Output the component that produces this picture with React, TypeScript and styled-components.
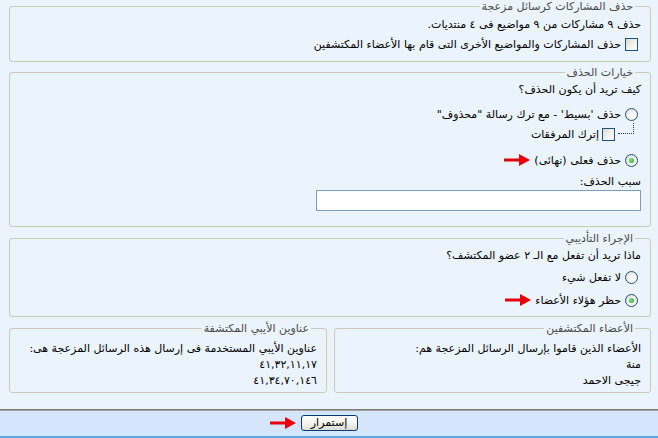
import React from "react";
import styled, { createGlobalStyle } from "styled-components";

const Global = createGlobalStyle`
  html, body { margin: 0; padding: 0; background: #ebf3fd; }
  body { font-family: "DejaVu Sans", sans-serif; font-size: 11px; color: #000; }
`;

const Page = styled.div`
  height: 438px;
  display: flex;
  flex-direction: column;
  box-sizing: border-box;
  overflow: hidden;
`;

const Content = styled.div`
  display: flex;
  flex-direction: column;
  gap: 4px;
  padding: 0 7px 0 9px;
`;

const Box = styled.fieldset<{ $bottom?: number; $gap?: number }>`
  margin: ${(p) => p.$gap ?? 0}px 0 0 0;
  border: 1px solid #cacbb7;
  border-radius: 3px;
  padding: 0 9px ${(p) => p.$bottom ?? 6}px 9px;
  min-width: 0;
  display: flex;
  flex-direction: column;
`;

const Legend = styled.legend`
  padding: 0 2px;
  margin-right: 6px;
  font-size: 11px;
  line-height: 13px;
  height: 13px;
  color: #4a4a4a;
`;

const Line = styled.div<{ $h?: number; $mt?: number }>`
  line-height: ${(p) => p.$h ?? 16}px;
  height: ${(p) => p.$h ?? 16}px;
  margin-top: ${(p) => p.$mt ?? 0}px;
  white-space: nowrap;
`;

const OptRow = styled.label<{ $mt?: number }>`
  display: flex;
  align-items: center;
  gap: 4px;
  height: 18px;
  margin-top: ${(p) => p.$mt ?? 0}px;
  white-space: nowrap;
`;

const Radio = styled.span<{ $on?: boolean }>`
  width: 11px;
  height: 11px;
  margin-right: 3px;
  border-radius: 50%;
  border: 1px solid #1c5180;
  background: radial-gradient(circle at 65% 65%, #ffffff 0%, #f3f3ef 45%, #d6d6cc 100%);
  display: inline-flex;
  align-items: center;
  justify-content: center;
  flex: none;
  &::after {
    content: "";
    display: ${(p) => (p.$on ? "block" : "none")};
    width: 5px;
    height: 5px;
    border-radius: 50%;
    background: radial-gradient(circle at 40% 40%, #7de27d, #21a121);
  }
`;

const Check = styled.span<{ $mr?: number }>`
  width: 11px;
  height: 11px;
  margin-right: ${(p) => p.$mr ?? 3}px;
  border: 1px solid #1c5180;
  background: linear-gradient(135deg, #dcdcd4 0%, #f4f4f0 60%, #ffffff 100%);
  flex: none;
`;

const SubOption = styled.div`
  display: flex;
  align-items: flex-end;
  height: 18px;
  margin-right: 7px;
`;

const Connector = styled.span`
  width: 15px;
  height: 10px;
  border-right: 1px dotted #333;
  border-bottom: 1px dotted #333;
  margin-bottom: 7px;
  flex: none;
`;

const SubLabel = styled.label`
  display: flex;
  align-items: center;
  gap: 3px;
  height: 14px;
  white-space: nowrap;
  margin-right: 1px;
`;

const TextInput = styled.input`
  width: 325px;
  height: 21px;
  box-sizing: border-box;
  border: 1px solid #7f9db9;
  background: #fff;
  margin: 0;
  padding: 1px 3px;
  font-family: "DejaVu Sans", sans-serif;
  font-size: 11px;
`;

const Row = styled.div`
  display: grid;
  grid-template-columns: 317px 318px;
  justify-content: space-between;
  margin-top: 1px;
`;

const Bar = styled.div`
  margin-top: auto;
  height: 29px;
  box-sizing: border-box;
  border-top: 1px solid #7d7d76;
  box-shadow: inset 0 1px 0 #a3a39d;
  border-bottom: 2px solid #5aa5e1;
  background: #d5e5fb;
  display: flex;
  justify-content: center;
  padding-top: 5px;
`;

const BtnWrap = styled.div`
  position: relative;
  height: 16px;
`;

const Button = styled.button`
  width: 57px;
  height: 16px;
  box-sizing: border-box;
  border: 1px solid #003c74;
  border-radius: 3px;
  background: linear-gradient(#ffffff 0%, #f4f4f0 50%, #dcdcd4 100%);
  font-family: "DejaVu Sans", sans-serif;
  font-size: 11px;
  line-height: 12px;
  padding: 0;
  color: #000;
  margin: 0;
`;

const ArrowSpot = styled.span`
  position: absolute;
  top: 2px;
  left: -31px;
  display: flex;
`;

const Arrow = () => (
  <svg width="26" height="12" viewBox="0 0 26 12" style={{ flex: "none" }}>
    <rect x="0" y="4.5" width="17" height="3" fill="#e8000b" />
    <polygon points="15,0 26,6 15,12" fill="#e8000b" />
  </svg>
);

export default function App() {
  return (
    <Page dir="rtl">
      <Global />
      <Content>
        <Box $bottom={8}>
          <Legend>حذف المشاركات كرسائل مزعجة</Legend>
          <Line $h={17} $mt={3}>حذف ٩ مشاركات من ٩ مواضيع فى ٤ منتديات.</Line>
          <OptRow $mt={2}>
            <Check />
            <span>حذف المشاركات والمواضيع الأخرى التى قام بها الأعضاء المكتشفين</span>
          </OptRow>
        </Box>

        <Box $bottom={15}>
          <Legend>خيارات الحذف</Legend>
          <Line $h={16} $mt={3}>كيف تريد أن يكون الحذف؟</Line>
          <OptRow $mt={7}>
            <Radio />
            <span>حذف 'بسيط' - مع ترك رسالة "محذوف"</span>
          </OptRow>
          <SubOption>
            <Connector />
            <SubLabel>
              <Check $mr={2} />
              <span>إترك المرفقات</span>
            </SubLabel>
          </SubOption>
          <OptRow $mt={10}>
            <Radio $on />
            <span>حذف فعلى (نهائى)</span>
            <Arrow />
          </OptRow>
          <Line $h={16} $mt={5}>سبب الحذف:</Line>
          <TextInput type="text" />
        </Box>

        <Box $bottom={7} $gap={1}>
          <Legend>الإجراء التأديبي</Legend>
          <Line $h={16} $mt={3}>ماذا تريد أن تفعل مع الـ ٢ عضو المكتشف؟</Line>
          <OptRow $mt={4}>
            <Radio />
            <span>لا تفعل شيء</span>
          </OptRow>
          <OptRow $mt={5}>
            <Radio $on />
            <span>حظر هؤلاء الأعضاء</span>
            <Arrow />
          </OptRow>
        </Box>

        <Row>
          <Box $bottom={3}>
            <Legend>الأعضاء المكتشفين</Legend>
            <Line $h={16} $mt={6}>الأعضاء الذين قاموا بإرسال الرسائل المزعجة هم:</Line>
            <Line $h={16}>منة</Line>
            <Line $h={16}>جيجى الاحمد</Line>
          </Box>
          <Box $bottom={3}>
            <Legend>عناوين الأيبي المكتشفة</Legend>
            <Line $h={16} $mt={6}>عناوين الأيبي المستخدمة فى إرسال هذه الرسائل المزعجة هى:</Line>
            <Line $h={16}>٤١,٣٢,١١,١٧</Line>
            <Line $h={16}>٤١,٣٤,٧٠,١٤٦</Line>
          </Box>
        </Row>
      </Content>
      <Bar>
        <BtnWrap>
          <ArrowSpot>
            <Arrow />
          </ArrowSpot>
          <Button type="button">إستمرار</Button>
        </BtnWrap>
      </Bar>
    </Page>
  );
}
